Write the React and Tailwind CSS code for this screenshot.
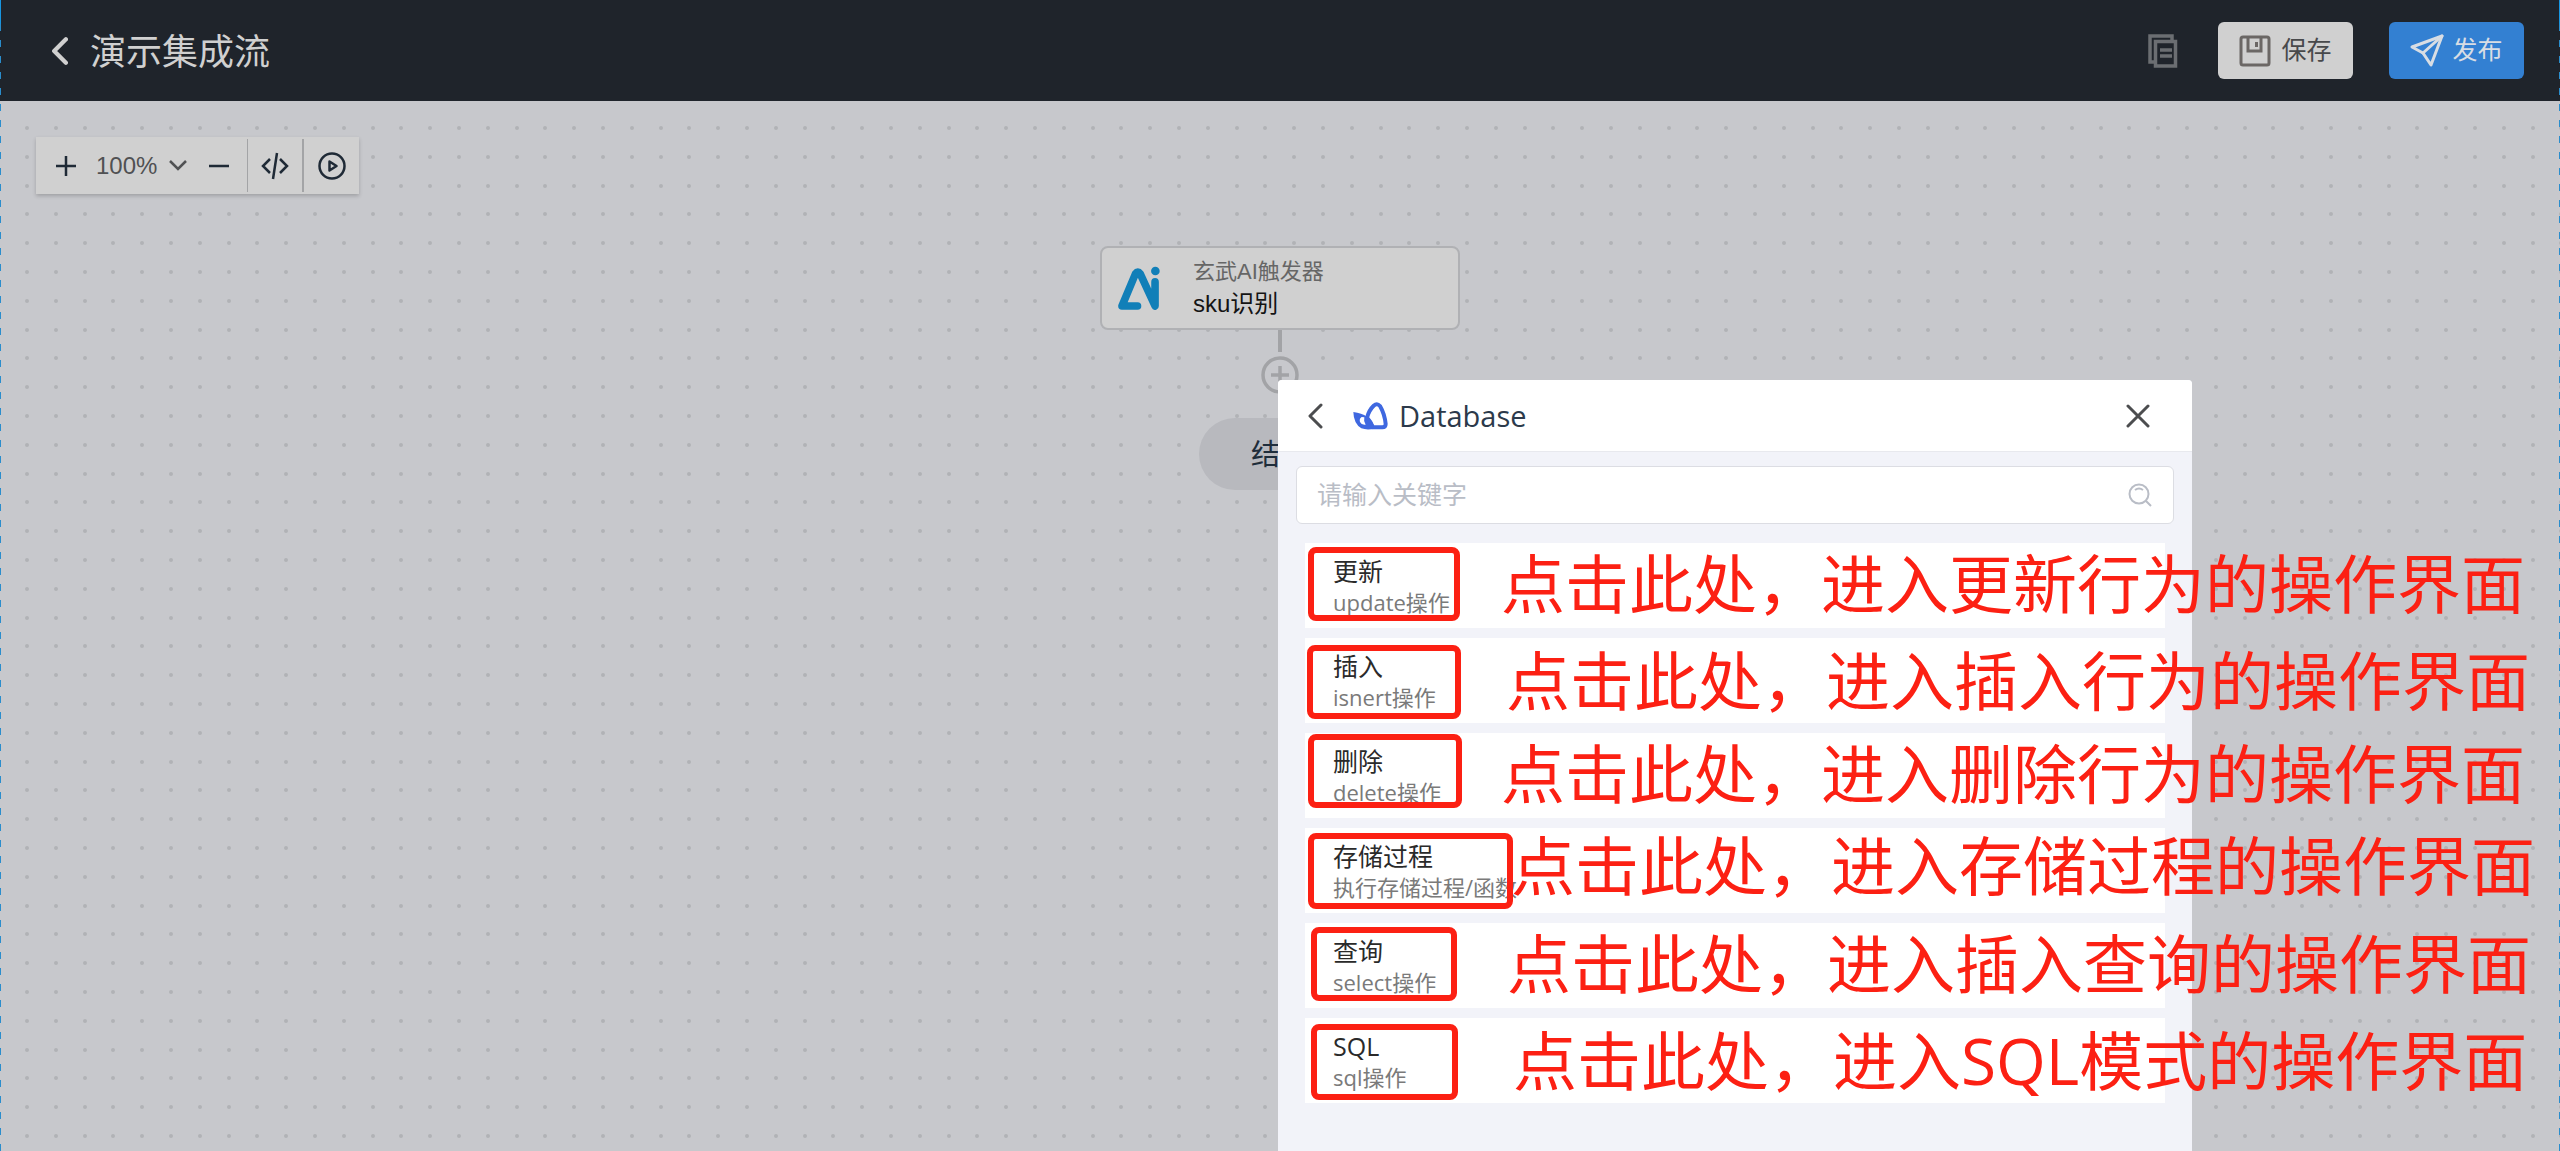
import React from "react";

const actions = [
  { title: "更新", desc: "update操作", box: "left-[3px] top-[4px] w-[152px] h-[74px]", note: "点击此处，进入更新行为的操作界面", notePos: "left-[196px] top-[9px]" },
  { title: "插入", desc: "isnert操作", box: "left-[2px] top-[7px] w-[154px] h-[74px]", note: "点击此处，进入插入行为的操作界面", notePos: "left-[201px] top-[11px]" },
  { title: "删除", desc: "delete操作", box: "left-[3px] top-[1px] w-[154px] h-[74px]", note: "点击此处，进入删除行为的操作界面", notePos: "left-[196px] top-[9px]" },
  { title: "存储过程", desc: "执行存储过程/函数", box: "left-[3px] top-[5px] w-[205px] h-[76px]", note: "点击此处，进入存储过程的操作界面", notePos: "left-[206px] top-[6px]" },
  { title: "查询", desc: "select操作", box: "left-[6px] top-[4px] w-[146px] h-[74px]", note: "点击此处，进入插入查询的操作界面", notePos: "left-[202px] top-[9px]" },
  { title: "SQL", desc: "sql操作", box: "left-[6px] top-[6px] w-[147px] h-[76px]", note: "点击此处，进入SQL模式的操作界面", notePos: "left-[208px] top-[11px]" },
];

const steps = [4, 33, 62, 90, 119];

function DotGrid() {
  return (
    <svg className="absolute inset-0 h-full w-full" aria-hidden="true">
      <defs>
        <pattern id="dots" x="23" y="23" width="144" height="144" patternUnits="userSpaceOnUse">
          {steps.map((y) => steps.map((x) => <circle key={`${x}-${y}`} cx={x} cy={y} r="2" fill="#b1b2b6" />))}
        </pattern>
      </defs>
      <rect x="23" y="23" width="100%" height="100%" fill="url(#dots)" />
    </svg>
  );
}

function Chevron({ className, width }) {
  return (
    <svg viewBox="0 0 16 26" className={className} fill="none" stroke="currentColor" strokeWidth={width} strokeLinecap="round" strokeLinejoin="round" aria-hidden="true">
      <path d="M14 2 3 13l11 11" />
    </svg>
  );
}

function CopyIcon() {
  return (
    <svg viewBox="0 0 30 34" className="h-[34px] w-[30px]" fill="none" stroke="currentColor" strokeWidth="3.5" aria-hidden="true">
      <path d="M7 28H2V2h22v5" />
      <path d="M7.5 7.500h20V32h-20z" />
      <path d="M12 16h12M12 22h12" />
    </svg>
  );
}

function SaveIcon() {
  return (
    <svg viewBox="0 0 32 32" className="size-8" fill="none" stroke="currentColor" strokeWidth="3" aria-hidden="true">
      <rect x="2" y="2" width="28" height="28" rx="2" />
      <path d="M9 2v14h13V2M17.500 7v5" />
    </svg>
  );
}

function SendIcon() {
  return (
    <svg viewBox="0 0 34 34" className="size-[34px]" fill="none" stroke="currentColor" strokeWidth="3" strokeLinejoin="round" strokeLinecap="round" aria-hidden="true">
      <path d="M32 2 2 13l11 6 8 12z" />
      <path d="M32 2 13 19" />
    </svg>
  );
}

function AiLogo() {
  return (
    <svg viewBox="114 103 130 134" className="h-[45px] w-[43px]" fill="none" stroke="#117fb8" strokeWidth="23" strokeLinecap="round" strokeLinejoin="round" aria-hidden="true">
      <path d="M173 223H126L167 125Q174 115 181 125L226 223V150" />
      <circle cx="227" cy="117" r="13" fill="#117fb8" stroke="none" />
    </svg>
  );
}

function DatabaseLogo() {
  return (
    <svg viewBox="248 92 105 84" className="h-7 w-[35px]" fill="none" aria-hidden="true">
      <path d="M310 103Q320 94 329 104Q343 128 346 158Q346 168 336 168H308Q300 150 290 139Q296 116 310 103Z" stroke="#3f68e0" strokeWidth="12" strokeLinejoin="round" />
      <path d="M249 122Q274 125 290 136Q309 148 312 172Q290 177 273 171Q250 157 249 122Z" fill="#3f68e0" />
      <path d="M274 137Q266 142 269 152Q274 162 286 160Q279 149 282 138Z" fill="#fff" />
    </svg>
  );
}

function EdgeDashes({ side }) {
  return (
    <div aria-hidden="true" className={`pointer-events-none absolute inset-y-0 w-px ${side}`}>
      <div className="h-6 bg-[#1795e0]" />
      <div className="h-full bg-[repeating-linear-gradient(to_bottom,#2a8dcc_0px_7px,transparent_7px_16px)]" />
    </div>
  );
}

export default function App() {
  return (
    <div lang="zh-CN" className="relative flex min-h-screen flex-col overflow-hidden bg-[#c7c8cc] font-['Liberation_Sans','Noto_Sans_CJK_SC',sans-serif]">
      <header className="flex h-[101px] shrink-0 items-center justify-between bg-[#1f242b] pl-[51px] pr-9">
        <div className="flex items-center gap-[22px] text-[#d0d0d0]">
          <button type="button" aria-label="返回"><Chevron className="h-[28px] w-[17px]" width="4" /></button>
          <h1 className="pt-1 text-[36px] leading-[52px]">演示集成流</h1>
        </div>
        <div className="flex items-center gap-9 text-[25px]">
          <button type="button" aria-label="复制" className="mr-1 text-[#6b6e72]"><CopyIcon /></button>
          <button type="button" className="flex h-[57px] w-[135px] items-center justify-center gap-[10px] rounded-md bg-[#d0d0d0] text-[#48494b]">
            <span className="text-[#6b6765]"><SaveIcon /></span>保存
          </button>
          <button type="button" className="flex h-[57px] w-[135px] items-center justify-center gap-[8px] rounded-md bg-[#3380d2] text-[#d8dde4]">
            <SendIcon />发布
          </button>
        </div>
      </header>

      <main className="relative flex-1 px-9 pt-9">
        <DotGrid />
        <div className="relative flex h-[57px] w-fit items-center bg-[#d0d0d0] text-[#1f2a36] shadow-[0_2px_4px_rgba(0,0,0,0.2)]">
          <button type="button" aria-label="放大" className="flex w-[60px] justify-center">
            <svg viewBox="0 0 20 20" className="size-5" stroke="currentColor" strokeWidth="2.500" aria-hidden="true"><path d="M0 10h20M10 0v20" /></svg>
          </button>
          <button type="button" className="flex items-center gap-3 text-[24px] text-[#505153]">
            100%
            <svg viewBox="0 0 18 12" className="h-3 w-[18px]" fill="none" stroke="currentColor" strokeWidth="2.500" aria-hidden="true"><path d="m1 1 8 8 8-8" /></svg>
          </button>
          <button type="button" aria-label="缩小" className="flex w-[60px] justify-center pl-1">
            <svg viewBox="0 0 20 20" className="size-5" stroke="currentColor" strokeWidth="2.500" aria-hidden="true"><path d="M0 10h20" /></svg>
          </button>
          <button type="button" aria-label="代码" className="flex h-[53px] w-[55px] items-center justify-center border-l border-[#a3a4a6]">
            <svg viewBox="0 0 28 28" className="size-7" fill="none" stroke="currentColor" strokeWidth="2.500" aria-hidden="true"><path d="M9 7 2 14l7 7M19 7l7 7-7 7M16 1l-4 26" /></svg>
          </button>
          <button type="button" aria-label="运行" className="flex h-[53px] w-[57px] items-center justify-center border-l-2 border-[#a3a4a6]">
            <svg viewBox="0 0 28 28" className="size-7" fill="none" stroke="currentColor" strokeWidth="2.500" strokeLinejoin="round" aria-hidden="true"><circle cx="14" cy="14" r="12.500" /><path d="m11.500 9.500 7 4.500-7 4.500z" /></svg>
          </button>
        </div>

        <div className="relative mt-[52px] flex flex-col items-center">
          <button type="button" className="flex h-[84px] w-[360px] items-center gap-8 rounded-lg border-2 border-[#b0b1b4] bg-[#d0d0d0] pl-4 text-left">
            <AiLogo />
            <span className="flex flex-col">
              <span className="text-[22px] leading-8 text-[#666666]">玄武AI触发器</span>
              <span className="text-[24px] leading-8 text-[#141414]">sku识别</span>
            </span>
          </button>
          <div className="flex w-[60px] flex-col items-center gap-1 bg-[#c7c8cc] text-[#a2a3a6]">
            <div className="h-[22px] w-1 bg-current" />
            <button type="button" aria-label="添加节点">
              <svg viewBox="0 0 38 38" className="size-[38px]" fill="none" stroke="currentColor" strokeWidth="3.500" aria-hidden="true"><circle cx="19" cy="19" r="17" /><path d="M10 19h18M19 10v18" /></svg>
            </button>
          </div>
          <div className="mt-6 flex h-[72px] w-[162px] items-center justify-center rounded-full bg-[#b8b9be] pt-1 text-[29px] text-[#1f2d3b]">结束</div>
        </div>

        <section aria-label="Database" className="absolute top-[279px] bottom-0 left-1/2 -ml-[2px] w-[914px] rounded-t-[4px] bg-[#f2f3f9] font-['Open_Sans','Noto_Sans_CJK_SC',sans-serif]">
          <header className="flex h-[72px] items-center rounded-t-[4px] border-b border-[#e8e9ee] bg-white pr-[42px] pl-[29px]">
            <button type="button" aria-label="返回" className="mr-[30px] text-[#4c4d4f]"><Chevron className="h-[26px] w-4" width="3" /></button>
            <DatabaseLogo />
            <h2 className="ml-[11px] flex-1 text-[29px] text-[#2c3a4b]">Database</h2>
            <button type="button" aria-label="关闭" className="text-[#4c4d4f]">
              <svg viewBox="0 0 24 24" className="size-6" stroke="currentColor" strokeWidth="3" strokeLinecap="round" aria-hidden="true"><path d="m2 2 20 20M22 2 2 22" /></svg>
            </button>
          </header>

          <div className="mx-[18px] mt-[14px] flex h-[58px] items-center rounded-md border border-[#dcdde3] bg-white pr-[21px] pl-5">
            <input type="text" aria-label="关键字" placeholder="请输入关键字" className="min-w-0 flex-1 bg-transparent text-[25px] outline-none placeholder:text-[#b9bdc6]" />
            <svg viewBox="0 0 24 24" className="size-6" fill="none" stroke="#b9bdc6" strokeWidth="2" aria-hidden="true"><circle cx="11" cy="11" r="9.500" /><path d="m18 18 5 5M7 7q4-3 8 0" /></svg>
          </div>

          <ul className="mx-[27px] mt-[19px] flex flex-col gap-[10px]">
            {actions.map((a) => (
              <li key={a.title} className="relative h-[85px] bg-white">
                <button type="button" className="flex w-full flex-col pt-[12px] pl-[28px] text-left">
                  <span className="text-[25px] leading-8 text-[#2a2a2a]">{a.title}</span>
                  <span className="text-[22px] leading-[30px] text-[#7a7a7a]">{a.desc}</span>
                </button>
                <span aria-hidden="true" className={`pointer-events-none absolute rounded-lg border-[6px] border-[#fc2013] ${a.box}`} />
                <span className={`pointer-events-none absolute text-[64px] leading-[64px] whitespace-nowrap text-[#fc2013] ${a.notePos}`}>{a.note}</span>
              </li>
            ))}
          </ul>
        </section>
      </main>
      <EdgeDashes side="left-0" />
      <EdgeDashes side="right-0" />
    </div>
  );
}
